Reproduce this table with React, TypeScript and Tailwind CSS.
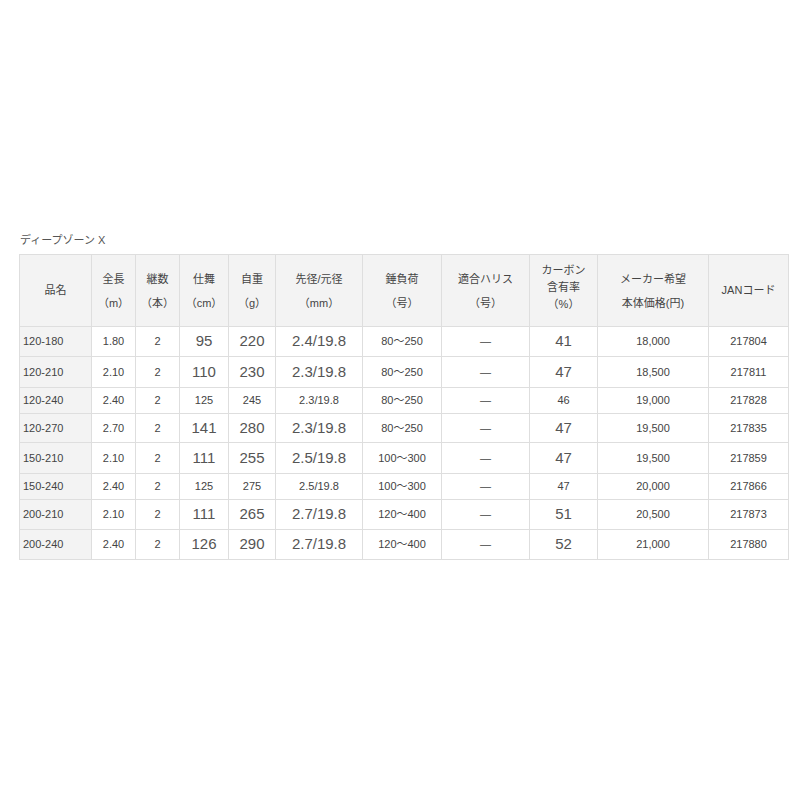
const cols = [72, 44, 44, 49, 47, 87, 79, 88, 68, 111, 80]

const rows = [
  { h: 30, big: true, d: ['120-180', '1.80', '2', '95', '220', '2.4/19.8', '80～250', '—', '41', '18,000', '217804'] },
  { h: 31, big: true, d: ['120-210', '2.10', '2', '110', '230', '2.3/19.8', '80～250', '—', '47', '18,500', '217811'] },
  { h: 26, big: false, d: ['120-240', '2.40', '2', '125', '245', '2.3/19.8', '80～250', '—', '46', '19,000', '217828'] },
  { h: 29, big: true, d: ['120-270', '2.70', '2', '141', '280', '2.3/19.8', '80～250', '—', '47', '19,500', '217835'] },
  { h: 31, big: true, d: ['150-210', '2.10', '2', '111', '255', '2.5/19.8', '100～300', '—', '47', '19,500', '217859'] },
  { h: 26, big: false, d: ['150-240', '2.40', '2', '125', '275', '2.5/19.8', '100～300', '—', '47', '20,000', '217866'] },
  { h: 30, big: true, d: ['200-210', '2.10', '2', '111', '265', '2.7/19.8', '120～400', '—', '51', '20,500', '217873'] },
  { h: 30, big: true, d: ['200-240', '2.40', '2', '126', '290', '2.7/19.8', '120～400', '—', '52', '21,000', '217880'] },
]

// columns that get the larger numerals in "big" rows
const bigCols = [3, 4, 5, 8]

const headers: string[][] = [
  ['品名'],
  ['全長', '（m）'],
  ['継数', '（本）'],
  ['仕舞', '（cm）'],
  ['自重', '（g）'],
  ['先径/元径', '（mm）'],
  ['錘負荷', '（号）'],
  ['適合ハリス', '（号）'],
  ['カーボン', '含有率', '（%）'],
  ['メーカー希望', '本体価格(円)'],
  ['JANコード'],
]

export default function App() {
  return (
    <div
      className="w-[800px] h-[800px] bg-white text-[#444]"
      style={{ fontFamily: '"Liberation Sans", "Noto Sans CJK JP", sans-serif' }}
    >
      <div className="pt-[233px] pl-[20px] text-[11px] leading-[14px] text-[#555]">ディープゾーン X</div>
      <table className="mt-[7px] ml-[19px] w-[770px] table-fixed border-collapse text-[11px]">
        <colgroup>
          {cols.map((w, i) => (
            <col key={i} style={{ width: w }} />
          ))}
        </colgroup>
        <thead>
          <tr className="h-[72px] bg-[#f3f3f3]">
            {headers.map((lines, i) => (
              <th key={i} className="border border-[#dedede] p-0 text-center font-normal align-middle">
                {lines.length === 3 ? (
                  <div className="flex flex-col leading-[17px] mt-[-6px]">
                    {lines.map((l) => (
                      <span key={l}>{l}</span>
                    ))}
                  </div>
                ) : lines.length === 2 ? (
                  <div className="flex flex-col gap-[9px] leading-[15px] mt-[2px]">
                    {lines.map((l) => (
                      <span key={l}>{l}</span>
                    ))}
                  </div>
                ) : (
                  <span>{lines[0]}</span>
                )}
              </th>
            ))}
          </tr>
        </thead>
        <tbody>
          {rows.map((r) => (
            <tr key={r.d[0] + r.d[10]} style={{ height: r.h }}>
              {r.d.map((v, i) => (
                <td
                  key={i}
                  className={
                    i === 0
                      ? 'border border-[#dedede] bg-[#f3f3f3] pl-[3px] p-0 text-left'
                      : 'border border-[#dedede] p-0 text-center'
                  }
                >
                  <span className={r.big && bigCols.includes(i) ? 'text-[15px] text-[#555]' : 'text-[11px]'}>{v}</span>
                </td>
              ))}
            </tr>
          ))}
        </tbody>
      </table>
    </div>
  )
}
